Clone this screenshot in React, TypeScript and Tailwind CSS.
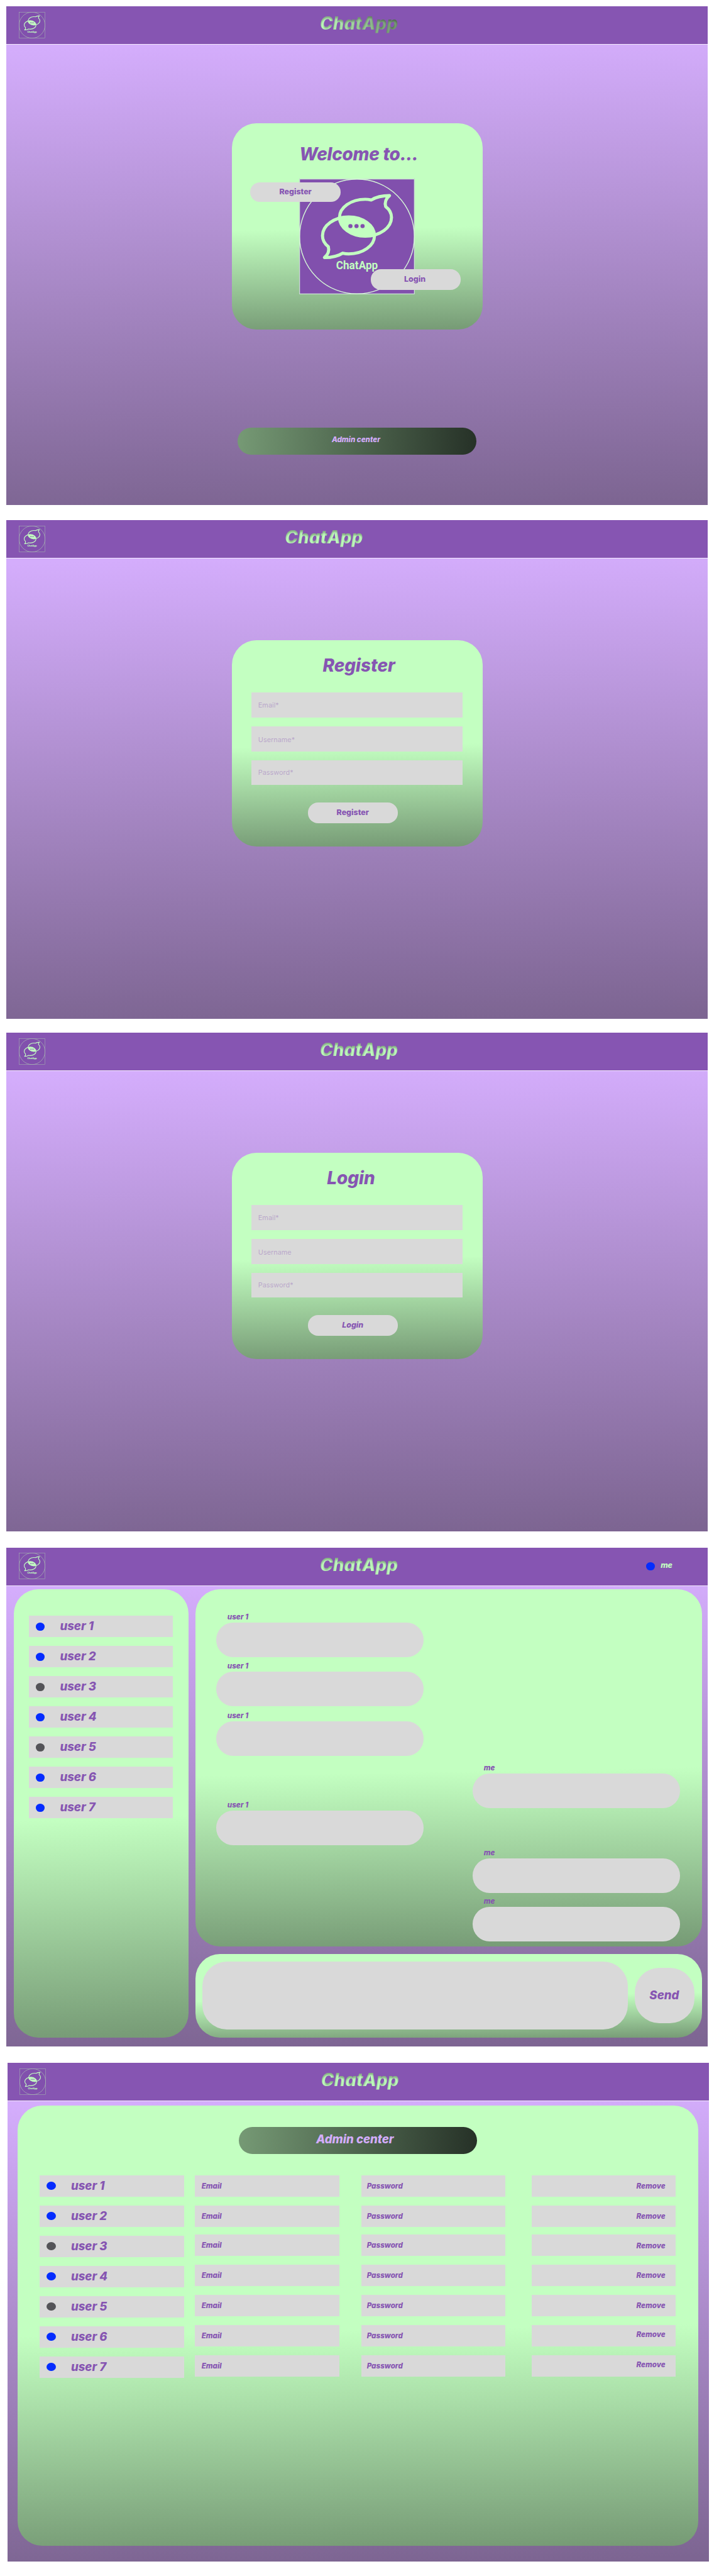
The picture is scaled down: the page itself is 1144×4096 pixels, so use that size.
import { useId, type ReactNode } from "react";

const UPPER =
  "M186 35 C172 35 158 38 148.5 44 C144 43 140 42.5 136 42.5 C107 42.5 83 59 83 80 C83 101 107 118.5 136 118.5 C166 118.5 190 101 190 80 C190 70 184 62 178 57.5 C175.5 48 178.5 41 186 35Z";

function Logo({ size, line, lineColor, className = "" }: { size: number; line: number; lineColor: string; className?: string }) {
  const id = useId();
  return (
    <svg width={size} height={size} viewBox="0 0 238 238" className={`block shrink-0 ${className}`}>
      <defs>
        <clipPath id={id}>
          <path d={UPPER} />
        </clipPath>
      </defs>
      <rect width="238" height="238" fill="#8150ad" />
      <rect x={line / 2} y={line / 2} width={238 - line} height={238 - line} fill="none" stroke={lineColor} strokeWidth={line * 0.8} />
      <circle cx="119" cy="119" r={119 - line / 2} fill="none" stroke={lineColor} strokeWidth={line} />
      <g clipPath={`url(#${id})`}>
        <path d={UPPER} fill="#c3ffc1" transform="rotate(180 119 98.7)" />
      </g>
      <g fill="none" stroke="#c3ffc1" strokeWidth="6.4" strokeLinejoin="round">
        <path d={UPPER} />
        <path d={UPPER} transform="rotate(180 119 98.7)" />
      </g>
      <g fill="#8150ad">
        <circle cx="105.5" cy="97.7" r="4.3" />
        <circle cx="118" cy="97.7" r="4.3" />
        <circle cx="130.5" cy="97.7" r="4.3" />
      </g>
      <text x="76" y="186.3" textLength="86" lengthAdjust="spacingAndGlyphs" fill="#c3ffc1" className="font-[Roboto,sans-serif] text-[23.5px] font-bold">
        ChatApp
      </text>
    </svg>
  );
}

function InsetFilter() {
  return (
    <svg width="0" height="0" className="absolute">
      <filter id="inset-shade" x="-5%" y="-5%" width="110%" height="110%" colorInterpolationFilters="sRGB">
        <feComponentTransfer in="SourceAlpha" result="inverse">
          <feFuncA type="table" tableValues="1 0" />
        </feComponentTransfer>
        <feOffset in="inverse" dy="3" />
        <feGaussianBlur stdDeviation="1.5" result="soft" />
        <feFlood floodColor="#000" floodOpacity="0.32" />
        <feComposite in2="soft" operator="in" />
        <feComposite in2="SourceAlpha" operator="in" result="shade" />
        <feMerge>
          <feMergeNode in="SourceGraphic" />
          <feMergeNode in="shade" />
        </feMerge>
      </filter>
    </svg>
  );
}

function Screen({ children, className = "", title = "ml-[437.4px] text-[#c3ffc1]", right }: { children: ReactNode; className?: string; title?: string; right?: ReactNode }) {
  return (
    <section className={`flex h-[793px] w-[1116px] flex-col bg-white ${className}`}>
      <header className="flex h-[60px] shrink-0 bg-[#8655b2]">
        <Logo size={42} line={4} lineColor="#a9b8b4" className="mt-[8.5px] ml-[19.7px]" />
        <h1 className={`mt-[10px] h-[40px] pr-1 text-[27.9px] leading-[34px] italic [filter:url(#inset-shade)] ${title}`}>ChatApp</h1>
        {right}
      </header>
      <div className="h-px shrink-0 bg-[#f4eafe]" />
      <div className="flex flex-1 flex-col bg-[linear-gradient(178.8deg,#d4adfc_1%,#7d6592_99%)]">{children}</div>
    </section>
  );
}

function Card({ children, className = "" }: { children: ReactNode; className?: string }) {
  return (
    <div className={`flex h-[328px] w-[399px] shrink-0 flex-col self-center rounded-[39px] bg-[linear-gradient(179deg,#c3ffc1_51%,#769a75)] ${className}`}>
      {children}
    </div>
  );
}

function Pill({ children, className = "" }: { children: ReactNode; className?: string }) {
  return (
    <button className={`flex w-[143.5px] shrink-0 items-center justify-center rounded-[16px] bg-[#d9d9d9] text-[12.4px] font-extrabold ${className}`}>
      {children}
    </button>
  );
}

function AdminPill({ className = "" }: { className?: string }) {
  return (
    <div className={`flex h-[43px] w-[379.5px] shrink-0 items-center justify-center self-center rounded-[22px] bg-[linear-gradient(92deg,#769a75,#263127)] text-[#d4adfc] italic ${className}`}>
      Admin center
    </div>
  );
}

function Form({ title, username, titleClass, buttonClass = "" }: { title: string; username: string; titleClass: string; buttonClass?: string }) {
  const field = "flex w-[335.5px] h-[39.5px] items-center bg-[#d9d9d9] pl-[10.5px] text-[10.9px] font-normal text-[#8655b2]/40";
  return (
    <Card className="mt-[130px]">
      <h2 className={`mt-[23px] text-[27.9px] leading-[34px] italic ${titleClass}`}>{title}</h2>
      <div className="mt-[26px] ml-[31.8px] flex flex-col">
        <div className={field}>Email*</div>
        <div className={`${field} mt-[14.8px] pt-[2px]`}>{username}</div>
        <div className={`${field} mt-[14px]`}>Password*</div>
      </div>
      <Pill className={`mt-[28px] ml-[121px] h-[33px] ${buttonClass}`}>{title}</Pill>
    </Card>
  );
}

function Dot({ online, className = "" }: { online: boolean; className?: string }) {
  return <span className={`h-[13.2px] w-[14.6px] shrink-0 rounded-[50%] ${online ? "bg-[#052cff]" : "bg-[#545458]"} ${className}`} />;
}

const USERS = [1, 2, 3, 4, 5, 6, 7].map((n) => ({ name: `user ${n}`, online: n !== 3 && n !== 5 }));

function UserList({ className = "" }: { className?: string }) {
  return (
    <ul className={`flex w-[229.3px] flex-col gap-[13.9px] ${className}`}>
      {USERS.map((u) => (
        <li key={u.name} className="flex h-[34.1px] items-center bg-[#d9d9d9] text-[18.6px] italic">
          <Dot online={u.online} className="ml-[11px]" />
          <span className="ml-[24px]">{u.name}</span>
        </li>
      ))}
    </ul>
  );
}

function Message({ from, className = "" }: { from: string; className?: string }) {
  return (
    <div className={className}>
      <p className="pl-[18px] text-[11.6px] leading-[14px] italic">{from}</p>
      <div className="mt-[2px] h-[55px] w-[330px] rounded-[27px] bg-[#d9d9d9]" />
    </div>
  );
}

function Column({ label, shifts, className }: { label: string; shifts: string[]; className: string }) {
  return (
    <ul className={`flex w-[229.3px] flex-col ${className}`}>
      {shifts.map((shift, i) => (
        <li key={i} className={`flex h-[34.1px] items-center bg-[#d9d9d9] text-[11.6px] italic ${i === 0 ? "" : i === 2 ? "mt-[12.3px]" : "mt-[13.9px]"}`}>
          <span className={shift}>{label}</span>
        </li>
      ))}
    </ul>
  );
}

export default function App() {
  return (
    <main className="flex h-[4096px] w-[1144px] flex-col overflow-hidden bg-white pt-[10px] pl-[10px] font-[Inter,sans-serif] font-extrabold text-[#8655b2]">
      <InsetFilter />
      <Screen title="ml-[437.4px] bg-[linear-gradient(95deg,#c3ffc1_10%,#769a75_95%)] bg-clip-text text-transparent">
        <Card className="mt-[125px]">
          <h2 className="mt-[32px] pl-[107.8px] text-[27.9px] leading-[34px] tracking-[-0.24px] italic">Welcome to...</h2>
          <div className="relative mt-[22px] ml-[107.6px] h-[184px] w-[184px]">
            <Logo size={184} line={1.8} lineColor="#d6f9d8" />
            <Pill className="absolute top-[6px] -left-[77.7px] h-[31px] pb-[1px]">Register</Pill>
            <Pill className="absolute top-[143.5px] left-[113.7px] h-[33px] pr-[3px]">Login</Pill>
          </div>
        </Card>
        <AdminPill className="mt-[155.5px] pr-[3px] pb-[3px] text-[11.6px]" />
      </Screen>

      <Screen className="mt-[24px]" title="ml-[381.6px] text-[#c3ffc1]">
        <Form title="Register" username="Username*" titleClass="pl-[145px]" />
      </Screen>

      <Screen className="mt-[22px]">
        <Form title="Login" username="Username" titleClass="pl-[151.7px]" buttonClass="italic" />
      </Screen>

      <Screen
        className="mt-[25.5px]"
        right={
          <div className="ml-auto flex items-center pr-[56px] text-[12.4px] text-[#c3ffc1] italic">
            <Dot online />
            <span className="ml-[9px] pb-[2px]">me</span>
          </div>
        }
      >
        <div className="flex gap-[11px] pt-[5.7px] pl-[11.8px]">
          <aside className="h-[712.5px] w-[278px] rounded-[39px] bg-[linear-gradient(178deg,#c3ffc1_51%,#769a75)] pt-[42px]">
            <UserList className="ml-[24px]" />
          </aside>
          <div className="flex flex-col gap-[11.5px]">
            <div className="flex h-[568px] w-[806px] rounded-[39px] bg-[linear-gradient(179deg,#c3ffc1_51%,#769a75)]">
              <div className="ml-[33px] pt-[37px]">
                <Message from="user 1" />
                <Message from="user 1" className="mt-[7.2px]" />
                <Message from="user 1" className="mt-[7.3px]" />
                <Message from="user 1" className="mt-[71px]" />
              </div>
              <div className="ml-[78px] pt-[277px]">
                <Message from="me" />
                <Message from="me" className="mt-[63.8px]" />
                <Message from="me" className="mt-[5.6px]" />
              </div>
            </div>
            <div className="flex h-[133px] w-[806px] items-center gap-[11.7px] rounded-[39px] bg-[linear-gradient(179deg,#c3ffc1_51%,#769a75)] pl-[11.6px]">
              <div className="h-[107.8px] w-[676.3px] rounded-[39px] bg-[#d9d9d9]" />
              <button className="flex h-[88.4px] w-[95px] items-center justify-center rounded-[39px] bg-[#d9d9d9] pr-[2px] text-[18.6px] font-extrabold italic">Send</button>
            </div>
          </div>
        </div>
      </Screen>

      <Screen className="mt-[26.5px] ml-[1.6px]">
        <div className="mt-[7px] ml-[16px] flex h-[700px] w-[1083.5px] flex-col rounded-[39px] bg-[linear-gradient(179deg,#c3ffc1_51%,#769a75)]">
          <AdminPill className="mt-[34px] pr-[9px] pb-[3px] text-[18.6px]" />
          <div className="mt-[33.7px] flex pl-[35.7px]">
            <UserList />
            <Column label="Email" className="ml-[17.8px]" shifts={Array(7).fill("ml-[10.3px] pt-[2px]")} />
            <Column label="Password" className="ml-[35.5px]" shifts={Array(7).fill("ml-[8.5px] pt-[1px]")} />
            <Column
              label="Remove"
              className="ml-[41.3px]"
              shifts={[
                "ml-auto mr-[16.5px] pt-[2px]",
                "ml-auto mr-[16.5px] pt-[2px]",
                "ml-auto mr-[16.5px] pt-[3px]",
                "ml-auto mr-[16.5px] pt-[1px]",
                "ml-auto mr-[16.5px] pt-[2px]",
                "ml-auto mr-[16.5px] pb-[3px]",
                "ml-auto mr-[16.5px] pb-[3px]",
              ]}
            />
          </div>
        </div>
      </Screen>
    </main>
  );
}
